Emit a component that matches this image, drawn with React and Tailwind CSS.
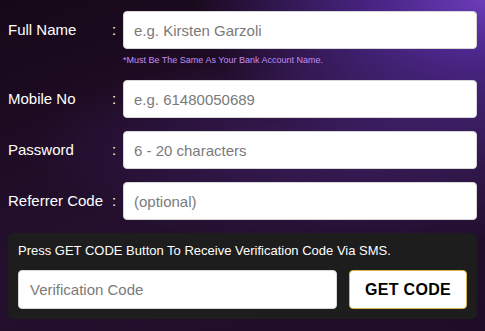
const fields = [
  { label: 'Full Name', placeholder: 'e.g. Kirsten Garzoli', hint: '*Must Be The Same As Your Bank Account Name.' },
  { label: 'Mobile No', placeholder: 'e.g. 61480050689' },
  { label: 'Password', placeholder: '6 - 20 characters', type: 'password' },
  { label: 'Referrer Code', placeholder: '(optional)' },
];

const Field = ({ label, placeholder, hint, type = 'text' }) => (
  <div className="mb-[13px]">
    <div className="flex items-center">
      <label className="w-[104px] shrink-0 text-[15px] text-white">{label}</label>
      <span className="w-[11px] shrink-0 text-[15px] text-white">:</span>
      <input
        type={type}
        placeholder={placeholder}
        className="h-[38px] min-w-0 flex-1 rounded-[4px] border border-[#d6d6d6] bg-white px-[10px] text-[15px] text-gray-800 placeholder:text-[#7a7a7a] outline-none"
      />
    </div>
    {hint && (
      <p className="ml-[115px] mt-[4px] h-[14px] text-[9px] leading-[14px] text-[#c38cf5]">{hint}</p>
    )}
  </div>
);

export default function App() {
  return (
    <div
      className="h-[331px] w-[485px] overflow-hidden bg-[radial-gradient(ellipse_60%_50%_at_100%_0%,#6b3cb8_0%,#4a2688_35%,transparent_100%),radial-gradient(ellipse_70%_30%_at_75%_45%,#3a1c5c_0%,transparent_100%),linear-gradient(160deg,#170818_0%,#24102e_55%,#1e0c28_100%)] px-2 pt-[11px]"
      style={{ fontFamily: '"Liberation Sans", Arial, sans-serif' }}
    >
      {fields.map((f) => (
        <Field key={f.label} {...f} />
      ))}

      <div className="mt-[5px] rounded-[5px] bg-[#1d1d1e] px-[10px] pb-[10px] pt-[9px]">
        <p className="text-[13px] leading-[17px] text-white">
          Press GET CODE Button To Receive Verification Code Via SMS.
        </p>
        <div className="mt-[11px] flex items-center gap-[12px]">
          <input
            placeholder="Verification Code"
            className="h-[39px] w-[319px] rounded-[4px] border border-[#d6d6d6] bg-white px-[11px] text-[15px] placeholder:text-[#7a7a7a] outline-none"
          />
          <button className="h-[39px] flex-1 rounded-[4px] border border-[#d9b447] bg-white text-[16px] font-bold tracking-[0.3px] text-black">
            GET CODE
          </button>
        </div>
      </div>
    </div>
  );
}
